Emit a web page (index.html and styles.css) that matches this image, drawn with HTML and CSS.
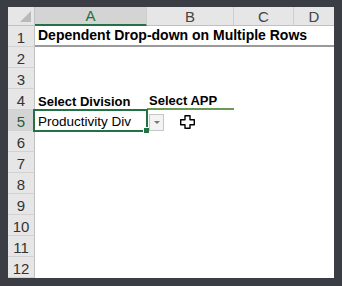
FILE: index.html
```html
<!DOCTYPE html>
<html>
<head>
<meta charset="utf-8">
<link rel="stylesheet" href="styles.css">
</head>
<body>
<div class="sheet">
  <div class="corner"><span class="tri"></span></div>
  <div class="colh sel">A</div>
  <div class="colh">B</div>
  <div class="colh">C</div>
  <div class="colh last">D</div>

  <div class="rowh">1</div>
  <div class="cell title b1">Dependent Drop-down on Multiple Rows</div>
  <div class="cell b1"></div>
  <div class="cell b1"></div>
  <div class="cell b1"></div>

  <div class="rowh">2</div><div class="cell"></div><div class="cell"></div><div class="cell"></div><div class="cell"></div>
  <div class="rowh">3</div><div class="cell"></div><div class="cell"></div><div class="cell"></div><div class="cell"></div>

  <div class="rowh">4</div>
  <div class="cell bold">Select Division</div>
  <div class="cell bold green">Select APP</div>
  <div class="cell"></div><div class="cell"></div>

  <div class="rowh selr">5</div>
  <div class="cell active">Productivity Div<span class="handle"></span></div>
  <div class="cell"></div><div class="cell"></div><div class="cell"></div>

  <div class="rowh">6</div><div class="cell"></div><div class="cell"></div><div class="cell"></div><div class="cell"></div>
  <div class="rowh">7</div><div class="cell"></div><div class="cell"></div><div class="cell"></div><div class="cell"></div>
  <div class="rowh">8</div><div class="cell"></div><div class="cell"></div><div class="cell"></div><div class="cell"></div>
  <div class="rowh">9</div><div class="cell"></div><div class="cell"></div><div class="cell"></div><div class="cell"></div>
  <div class="rowh">10</div><div class="cell"></div><div class="cell"></div><div class="cell"></div><div class="cell"></div>
  <div class="rowh">11</div><div class="cell"></div><div class="cell"></div><div class="cell"></div><div class="cell"></div>
  <div class="rowh">12</div><div class="cell"></div><div class="cell"></div><div class="cell"></div><div class="cell"></div>

  <div class="dropbtn"><span class="arrow"></span></div>
  <svg class="cursor" width="15" height="14" viewBox="0 0 15 14">
    <path d="M5 0.7h5v4h4.3v5h-4.3v3.6h-5v-3.6h-4.3v-5h4.3z" fill="#fff" stroke="#000" stroke-width="1.4" stroke-linejoin="round"/>
  </svg>
</div>
</body>
</html>
```
FILE: styles.css
```css
html, body {
  margin: 0;
  padding: 0;
  background: #3a3d44;
}
body {
  padding: 7px 8px;
  width: 342px;
  height: 286px;
  box-sizing: border-box;
  overflow: hidden;
}
.sheet {
  position: relative;
  display: grid;
  grid-template-columns: 27px 112px 87px 60px 40px;
  grid-template-rows: 19px repeat(12, 21px);
  background: #fff;
  font-family: "Liberation Sans", Arial, sans-serif;
  font-size: 13px;
  color: #000;
  width: 326px;
}
.corner {
  position: relative;
  background: #e6e6e6;
  border-right: 1px solid #c0c0c0;
  border-bottom: 1px solid #c0c0c0;
}
.tri {
  position: absolute;
  right: 3px;
  bottom: 3px;
  width: 0;
  height: 0;
  border-left: 11px solid transparent;
  border-bottom: 11px solid #b9b9b9;
}
.colh {
  background: #e6e6e6;
  color: #444;
  font-size: 15px;
  display: flex;
  align-items: center;
  justify-content: center;
  border-right: 1px solid #cfcfcf;
  border-bottom: 1px solid #c0c0c0;
}
.colh.last { border-right: none; }
.colh.sel {
  background: #d4d4d4;
  color: #217346;
  border-bottom: 2px solid #217346;
}
.rowh {
  background: #e6e6e6;
  color: #333;
  font-size: 15px;
  display: flex;
  align-items: center;
  justify-content: center;
  padding-top: 2px;
  border-right: 1px solid #c0c0c0;
  border-bottom: 1px solid #d2d2d2;
}
.rowh.selr {
  background: #d4d4d4;
  color: #2a5a38;
}
.cell {
  display: flex;
  align-items: flex-end;
  padding-left: 3px;
  padding-bottom: 3px;
  white-space: nowrap;
  overflow: visible;
  min-width: 0;
}
.title {
  font-weight: bold;
  font-size: 14px;
  letter-spacing: 0;
}
.b1 { border-bottom: 2px solid #9a9a9a; padding-bottom: 2px; }
.bold { font-weight: bold; font-size: 13px; padding-bottom: 1px; }
.green {
  border-bottom: 2px solid #6b9a58;
  padding-left: 2px;
  padding-bottom: 0;
}
.active {
  position: relative;
  box-sizing: border-box;
  margin: -1px -1px -1px -2px;
  border: 2px solid #217346;
  padding-left: 3px;
  padding-bottom: 1px;
  font-size: 13.5px;
}
.handle {
  position: absolute;
  right: -4px;
  bottom: -4px;
  width: 5px;
  height: 5px;
  background: #217346;
  border: 1px solid #fff;
}
.dropbtn {
  position: absolute;
  left: 141px;
  top: 107px;
  width: 13px;
  height: 15px;
  border: 1px solid #c6c6c6;
  background: #f3f3f3;
  display: flex;
  align-items: center;
  justify-content: center;
}
.arrow {
  width: 0;
  height: 0;
  border-left: 3px solid transparent;
  border-right: 3px solid transparent;
  border-top: 3px solid #777;
}
.cursor {
  position: absolute;
  left: 172px;
  top: 108px;
}
```
